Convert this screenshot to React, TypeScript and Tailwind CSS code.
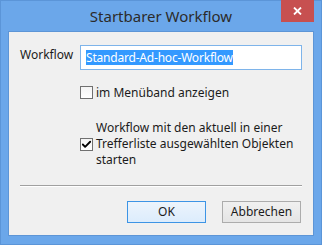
import { Check } from 'lucide-react';

const font = { fontFamily: '"Noto Sans", "Open Sans", sans-serif' };

const CheckBox = ({ checked }: { checked?: boolean }) => (
  <div className="w-[13px] h-[13px] shrink-0 border border-[#707070] bg-gradient-to-b from-[#f4f4f4] to-[#ffffff] flex items-center justify-center">
    {checked && <Check className="w-[11px] h-[11px] text-black" strokeWidth={4} />}
  </div>
);

const App = () => {
  return (
    <div
      className="w-[322px] h-[245px] bg-[#6ba7ea] border border-[#5b95d8] flex flex-col px-[7px] pb-[8px] text-[12px] text-[#1b1b1b]"
      style={font}
    >
      <div className="relative h-[30px] shrink-0 flex items-center justify-center">
        <span className="text-[15px] text-[#2b2b2b] pt-[1px]">Startbarer Workflow</span>
        <div className="absolute right-0 top-[-1px] w-[33px] h-[22px] bg-[#c75050] flex items-center justify-center">
          <svg width="9" height="8" viewBox="0 0 9 8">
            <path d="M1 0.5 L8 7.5 M8 0.5 L1 7.5" stroke="#fff" strokeWidth="1.8" />
          </svg>
        </div>
      </div>

      <div className="flex-1 bg-[#f0f0f0] border border-[#5d95d6] flex flex-col px-[11px] pt-[13px] pb-[12px]">
        <div className="flex">
          <div className="w-[60px] pt-[1px]">Workflow</div>
          <div className="w-[222px] h-[25px] border border-[#7eb4ea] bg-white flex items-center pl-[5px]">
            <span className="bg-[#3399ff] text-white leading-[15px] tracking-[-0.2px]">Standard-Ad-hoc-Workflow</span>
          </div>
        </div>

        <div className="flex items-center gap-[3px] ml-[60px] mt-[15px]">
          <CheckBox />
          <span className="leading-[15px]">im Menüband anzeigen</span>
        </div>

        <div className="flex items-center gap-[3px] ml-[60px] mt-[20px]">
          <CheckBox checked />
          <div className="flex flex-col leading-[16px]">
            <span>Workflow mit den aktuell in einer</span>
            <span>Trefferliste ausgewählten Objekten</span>
            <span>starten</span>
          </div>
        </div>

        <div className="mt-[17px] border-t border-[#a0a0a0] border-b border-b-white" />

        <div className="flex justify-end gap-[16px] mt-auto pr-[1px]">
          <button className="w-[79px] h-[22px] border border-[#3c94e5] bg-gradient-to-b from-[#ecf4fc] to-[#dcecfc] text-[12px]">
            OK
          </button>
          <button className="w-[79px] h-[22px] border border-[#acacac] bg-gradient-to-b from-[#f0f0f0] to-[#e5e5e5] text-[12px]">
            Abbrechen
          </button>
        </div>
      </div>
    </div>
  );
};

export default App;
